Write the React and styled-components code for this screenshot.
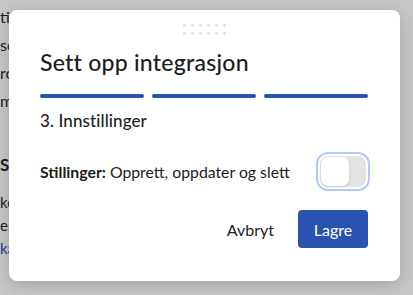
import React, { useState } from 'react'
import styled, { createGlobalStyle } from 'styled-components'

const GlobalStyle = createGlobalStyle`
  html, body {
    margin: 0;
    padding: 0;
    background: #ffffff;
    font-family: Lato, "Noto Sans", sans-serif;
    color: #1c1c1c;
  }
`

const topLine = 'tilgang til å synkronisere stillinger og få dem til'

// only the first letters of these lines peek out beside the dialog
const backgroundLines = ['se', 'rom', 'min']

const secondLines = [
  { text: 'kom', link: false },
  { text: 'er', link: false },
  { text: 'kart', link: true },
]

export default function App() {
  const [enabled, setEnabled] = useState(false)

  return (
    <>
      <GlobalStyle />
      <Page>
        <Article>
          <TopLine>{topLine}</TopLine>
          {backgroundLines.map((line) => (
            <Line key={line}>{line}</Line>
          ))}
          <Heading>Sak</Heading>
          <SubSection>
            {secondLines.map((line) => (
              <SmallLine key={line.text} $link={line.link}>
                {line.text}
              </SmallLine>
            ))}
          </SubSection>
        </Article>

        <Backdrop>
          <Dialog role="dialog" aria-labelledby="dialog-title">
            <Handle>
              {Array.from({ length: 12 }).map((_, i) => (
                <Dot key={i} />
              ))}
            </Handle>

            <Title id="dialog-title">Sett opp integrasjon</Title>

            <Steps>
              <Step $done />
              <Step $done />
              <Step $done />
            </Steps>

            <StepTitle>3. Innstillinger</StepTitle>

            <SettingRow>
              <SettingLabel>
                <strong>Stillinger:</strong> Opprett, oppdater og slett
              </SettingLabel>
              <Toggle
                type="button"
                role="switch"
                aria-checked={enabled}
                $on={enabled}
                onClick={() => setEnabled(!enabled)}
              >
                <Knob $on={enabled} />
              </Toggle>
            </SettingRow>

            <Footer>
              <GhostButton type="button">Avbryt</GhostButton>
              <PrimaryButton type="button">Lagre</PrimaryButton>
            </Footer>
          </Dialog>
        </Backdrop>
      </Page>
    </>
  )
}

const Page = styled.div`
  position: relative;
  width: 413px;
  height: 295px;
  overflow: hidden;
`

const Article = styled.div`
  padding-top: 3px;
  font-size: 16px;
  color: #2b2b2b;
`

const TopLine = styled.div`
  white-space: nowrap;
  line-height: 28px;
`

const Line = styled.div`
  white-space: nowrap;
  line-height: 28px;
`

const Heading = styled.div`
  margin-top: 37px;
  font-weight: 700;
  font-size: 17px;
  line-height: 26px;
  white-space: nowrap;
`

const SubSection = styled.div`
  margin-top: 13px;
`

const SmallLine = styled.div`
  white-space: nowrap;
  line-height: 23px;
  font-size: 15px;
  color: ${(props) => (props.$link ? '#2f55b5' : '#2b2b2b')};
`

const Backdrop = styled.div`
  position: absolute;
  inset: 0;
  background: rgba(0, 0, 0, 0.22);
`

const Dialog = styled.div`
  box-sizing: border-box;
  width: 391px;
  height: 271px;
  margin: 10px 0 0 9px;
  padding: 14px 32px 0 31px;
  background: #ffffff;
  border-radius: 8px;
  box-shadow: 0 4px 18px rgba(0, 0, 0, 0.18);
  display: flex;
  flex-direction: column;
`

const Handle = styled.div`
  align-self: center;
  display: grid;
  grid-template-columns: repeat(6, 3px);
  grid-auto-rows: 3px;
  column-gap: 5px;
  row-gap: 5px;
  margin-left: 1px;
`

const Dot = styled.span`
  width: 3px;
  height: 3px;
  border-radius: 50%;
  background: #dcdcdc;
`

const Title = styled.h2`
  margin: 12px 0 0;
  font-size: 23px;
  font-weight: 500;
  line-height: 30px;
  letter-spacing: 0.25px;
  color: #1c1c1c;
`

const Steps = styled.div`
  display: flex;
  gap: 8px;
  margin-top: 17px;
`

const Step = styled.div`
  flex: 1;
  height: 4px;
  border-radius: 2px;
  background: ${(props) => (props.$done ? '#2853b0' : '#e2e2e2')};
`

const StepTitle = styled.h3`
  margin: 11px 0 0;
  font-size: 17px;
  font-weight: 500;
  line-height: 24px;
  letter-spacing: 0.1px;
  color: #1c1c1c;
`

const SettingRow = styled.div`
  display: flex;
  align-items: center;
  justify-content: space-between;
  margin-top: 23px;
`

const SettingLabel = styled.span`
  font-size: 15.8px;
  line-height: 20px;
  color: #1c1c1c;

  strong {
    font-weight: 700;
  }
`

const Toggle = styled.button`
  box-sizing: border-box;
  width: 46px;
  height: 31px;
  padding: 1px;
  border: none;
  border-radius: 8px;
  background: ${(props) => (props.$on ? '#2853b0' : '#e4e3e1')};
  box-shadow: 0 0 0 2px #ffffff, 0 0 0 4px #b3c9fb;
  display: flex;
  justify-content: ${(props) => (props.$on ? 'flex-end' : 'flex-start')};
  align-items: center;
  cursor: pointer;
  margin-right: 2px;
`

const Knob = styled.span`
  width: 28px;
  height: 29px;
  border-radius: 7px;
  background: #ffffff;
  box-shadow: 0 1px 2px rgba(0, 0, 0, 0.15);
`

const Footer = styled.div`
  display: flex;
  justify-content: flex-end;
  align-items: center;
  gap: 24px;
  margin-top: 23px;
`

const GhostButton = styled.button`
  border: none;
  background: none;
  padding: 0;
  font-family: inherit;
  font-size: 16px;
  color: #1c1c1c;
  cursor: pointer;
`

const PrimaryButton = styled.button`
  width: 70px;
  height: 38px;
  border: none;
  border-radius: 4px;
  background: #2853b0;
  color: #ffffff;
  font-family: inherit;
  font-size: 16px;
  cursor: pointer;
`
